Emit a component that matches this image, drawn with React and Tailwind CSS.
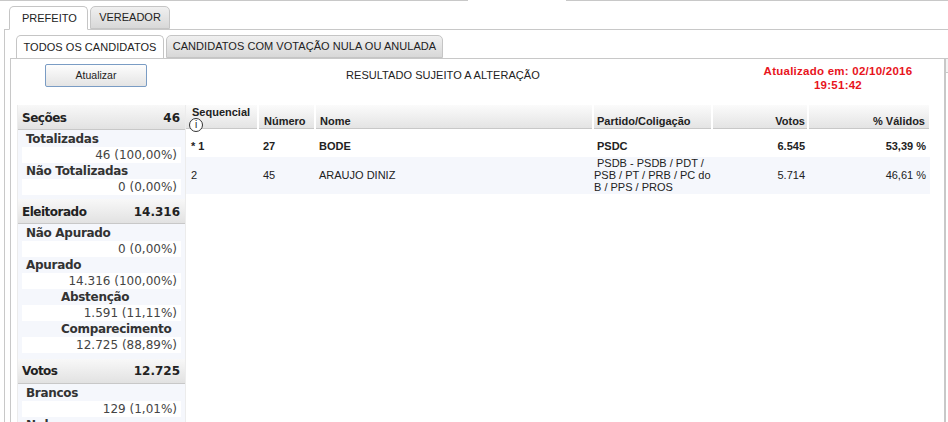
const rows = [
  { seq: "* 1", num: "27", nome: "BODE", partido: "PSDC", votos: "6.545", pct: "53,39 %", eleito: true },
  { seq: "2", num: "45", nome: "ARAUJO DINIZ", partido: "PSDB - PSDB / PDT / PSB / PT / PRB / PC do B / PPS / PROS", votos: "5.714", pct: "46,61 %" },
];

const sections = [
  {
    title: "Seções",
    total: "46",
    head: "pt-[2px]",
    gap: "pb-[4px]",
    items: [
      { label: "Totalizadas", value: "46 (100,00%)" },
      { label: "Não Totalizadas", value: "0 (0,00%)" },
    ],
  },
  {
    title: "Eleitorado",
    total: "14.316",
    head: "pt-[2px]",
    gap: "pb-[6px]",
    items: [
      { label: "Não Apurado", value: "0 (0,00%)" },
      { label: "Apurado", value: "14.316 (100,00%)" },
      { label: "Abstenção", value: "1.591 (11,11%)", nested: true },
      { label: "Comparecimento", value: "12.725 (88,89%)", nested: true },
    ],
  },
  {
    title: "Votos",
    total: "12.725",
    head: "pt-0",
    gap: "pb-0",
    items: [
      { label: "Brancos", value: "129 (1,01%)" },
    ],
  },
];

function Tab({ active, children, className }) {
  return (
    <div
      className={`flex items-center rounded-t-[5px] border border-[#c5c5c5] ${active ? "-mb-px border-b-white bg-white" : "bg-gradient-to-b from-[#f0f0f0] to-[#d8d8d8]"} ${className}`}
    >
      {children}
    </div>
  );
}

function Sidebar() {
  return (
    <div className="w-[169px] shrink-0 border-x border-[#ececec] font-['DejaVu_Sans',sans-serif] text-[12px] text-[#333]">
      {sections.map((s) => (
        <div key={s.title}>
          <div className={`flex h-[25px] items-center justify-between border-b border-[#c8c8c8] bg-gradient-to-b from-[#f8f8f8] to-[#e2e2e2] pl-[4px] pr-[5px] text-[#222] ${s.head}`}>
            <span className="font-bold tracking-[-0.5px]">{s.title}</span>
            <span className="font-bold">{s.total}</span>
          </div>
          <div className={`bg-[#f5f7fc] pl-[4px] pr-[4px] pt-[1px] ${s.gap}`}>
            {s.items.map((it) => (
              <div key={it.label}>
                <div className={`h-[16px] font-bold leading-[16px] tracking-[-0.3px] ${it.nested ? "pl-[39px]" : "pl-[4px]"}`}>
                  {it.label}
                </div>
                <div className="h-[16px] bg-white pr-[4px] text-right leading-[16px] text-[#444]">{it.value}</div>
              </div>
            ))}
          </div>
        </div>
      ))}
      <div className="h-[16px] overflow-hidden bg-[#f5f7fc] pl-[8px] font-bold leading-[16px]">Nulos</div>
    </div>
  );
}

function ResultsTable() {
  const th = "border-b border-[#c8c8c8] border-r-2 border-r-white bg-gradient-to-b from-[#fbfbfb] to-[#e4e4e4] px-[4px] align-bottom font-bold leading-[14px]";
  return (
    <table className="w-[744px] table-fixed border-collapse font-['Liberation_Sans',sans-serif] text-[11px] leading-[12px] text-[#222]">
      <colgroup>
        <col className="w-[72px]" />
        <col className="w-[57px]" />
        <col className="w-[278px]" />
        <col className="w-[119px]" />
        <col className="w-[96px]" />
        <col className="w-[122px]" />
      </colgroup>
      <thead>
        <tr className="h-[23px]">
          <th className={`${th} text-left`}>
            <div className="ml-[2px] leading-[12px]">Sequencial</div>
            <div className="relative z-10 -mb-[4px] -ml-[1px] flex size-[14px] items-center justify-center rounded-full border border-[#333] bg-white text-[10px] font-normal leading-none">
              i
            </div>
          </th>
          <th className={`${th} pl-[5px] text-left`}>Número</th>
          <th className={`${th} text-left`}>Nome</th>
          <th className={`${th} pl-[3px] text-left`}>Partido/Coligação</th>
          <th className={`${th} pr-[2px] text-right`}>Votos</th>
          <th className={`${th} text-right`}>% Válidos</th>
        </tr>
        <tr className="h-[5px]">
          <td colSpan={6} />
        </tr>
      </thead>
      <tbody>
        {rows.map((r) => {
          const nudge = r.eleito ? "pt-[2px]" : "pb-[1px]";
          return (
            <tr key={r.num} className={r.eleito ? "h-[24px] bg-white font-bold" : "h-[37px] bg-[#f5f7fc]"}>
              <td className={`pl-[5px] pr-[4px] ${nudge}`}>{r.seq}</td>
              <td className={`pl-[5px] pr-[4px] ${nudge}`}>{r.num}</td>
              <td className={`px-[4px] ${nudge}`}>{r.nome}</td>
              <td className={`pl-px pr-0 indent-[3px] ${nudge}`}>{r.partido}</td>
              <td className={`pl-[4px] pr-[3px] text-right ${nudge}`}>{r.votos}</td>
              <td className={`px-[4px] text-right ${nudge}`}>{r.pct}</td>
            </tr>
          );
        })}
      </tbody>
    </table>
  );
}

export default function App() {
  return (
    <div className="h-[422px] w-[948px] overflow-hidden bg-white font-['Liberation_Sans',sans-serif] text-[#222]">
      <div className="flex h-px">
        <div className="w-[468px] bg-[#c8c8c8]" />
        <div className="w-[98px]" />
        <div className="flex-1 bg-[#c8c8c8]" />
      </div>
      <div className="flex gap-[2px] pl-[9px] pt-[5px] text-[11px]">
        <Tab active className="h-[24px] w-[79px] pl-[12px]">PREFEITO</Tab>
        <Tab className="h-[23px] w-[80px] justify-center">VEREADOR</Tab>
      </div>
      <div className="ml-[4px] border-l border-t border-[#c8c8c8] pl-[5px] pt-[5px]">
        <div className="flex gap-[2px] pl-[6px] text-[11px] tracking-[0.05px]">
          <Tab active className="h-[24px] w-[148px] justify-center">TODOS OS CANDIDATOS</Tab>
          <Tab className="h-[23px] w-[277px] justify-center">CANDIDATOS COM VOTAÇÃO NULA OU ANULADA</Tab>
        </div>
        <div className="flex items-start">
          <div className="h-[364px] w-[936px] shrink-0 border-l border-r-2 border-t border-[#c8c8c8]">
            <div className="flex h-[46px] pt-[5px]">
              <div className="ml-[34px] flex h-[23px] w-[102px] items-center justify-center rounded-[2px] border border-[#7a9cc4] bg-gradient-to-b from-[#fdfdfd] to-[#e4e4e4] text-[10.5px]">
                Atualizar
              </div>
              <div className="ml-[199px] w-[277px] pt-[5px] text-[11px] leading-[12px] tracking-[0.05px]">
                RESULTADO SUJEITO A ALTERAÇÃO
              </div>
              <div className="w-[300px] pl-[130px] text-center text-[11.5px] font-bold leading-[14px] tracking-[0.25px] text-[#e8141c]">
                <div className="whitespace-nowrap">Atualizado em: 02/10/2016</div>
                <div>19:51:42</div>
              </div>
            </div>
            <div className="flex items-start pl-[6px]">
              <Sidebar />
              <ResultsTable />
            </div>
          </div>
          <div className="h-[15px] w-[3px] border-b border-t border-[#c8c8c8] bg-[#f4f4f4]" />
        </div>
      </div>
    </div>
  );
}
